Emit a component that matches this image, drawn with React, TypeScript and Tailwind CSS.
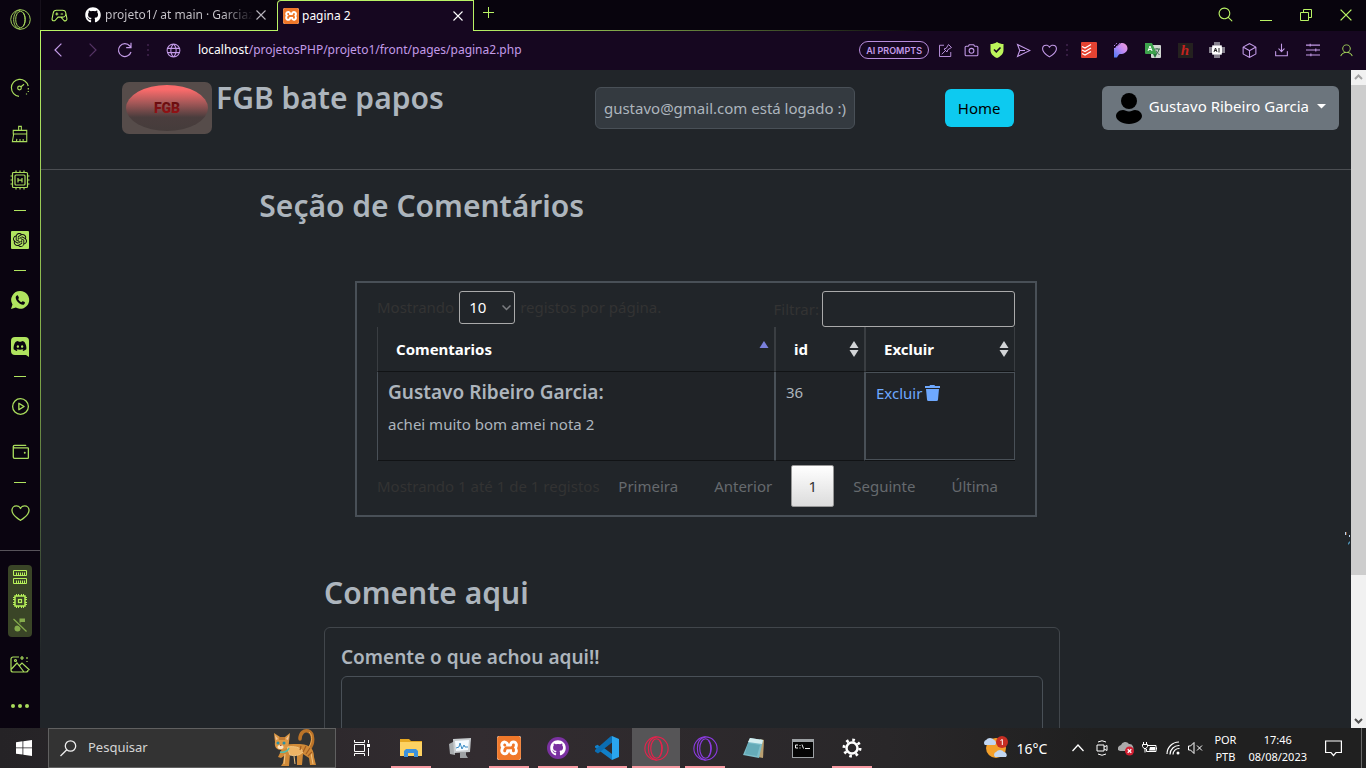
import type { ReactNode } from "react";
import {
  PiCamera,
  PiCube,
  PiDownloadSimple,
  PiGameController,
  PiGlobe,
  PiHeart,
  PiMagnifyingGlass,
  PiPlayCircle,
  PiUser,
  PiWallet,
} from "react-icons/pi";
import { FaDiscord, FaGithub } from "react-icons/fa";
import { SiOpenai, SiXampp } from "react-icons/si";

type IconProps = { size?: number; className?: string };

function Stroke({ size = 20, className = "", children, width = 1.2 }: IconProps & { children: ReactNode; width?: number }) {
  return (
    <svg
      width={size}
      height={size}
      viewBox="0 0 20 20"
      fill="none"
      stroke="currentColor"
      strokeWidth={width}
      className={className}
      aria-hidden="true"
    >
      {children}
    </svg>
  );
}

function OperaRings({ size = 22 }: IconProps) {
  return (
    <Stroke size={size} width={0.9}>
      <circle cx="10" cy="10" r="9.300" />
      <ellipse cx="10" cy="10" rx="4.600" ry="7.800" />
      <path d="M10 .7C5.500 1.500 3.500 5.500 3.500 10s2 8.500 6.500 9.300M12.500 3.500c2.300 3 2.300 10 0 13" />
    </Stroke>
  );
}

function Gauge() {
  return (
    <Stroke size={20}>
      <path d="M9 18.300A8.500 8.500 0 1 1 18.200 8" />
      <path d="M18.300 10v1.500M18.300 13v1M16.500 15.500v1" />
      <circle cx="9.500" cy="10" r="1.800" />
      <path d="m11 8.700 3-2.500" />
    </Stroke>
  );
}

function Brush() {
  return (
    <Stroke size={18}>
      <path d="M8.500 6V1.500h3V6M2.500 6h15v4h-15zM3 10l-1.500 8.500h16L17.500 10M6 18.500l.5-3M10 18.500v-3M13.500 18.500v-3" />
    </Stroke>
  );
}

function MemoryChip() {
  return (
    <Stroke size={20}>
      <rect x="2.500" y="2.500" width="15" height="15" rx="1" />
      <rect x="5" y="5" width="10" height="10" rx="1" />
      <path d="M8 8v4.500M12 8v4.500M8 10.200h4M6 .5v2M10 .5v2M14 .5v2M6 17.500v2M10 17.500v2M14 17.500v2M.5 6h2M.5 10h2M.5 14h2M17.500 6h2M17.500 10h2M17.500 14h2" />
    </Stroke>
  );
}

function DiscordTile() {
  return (
    <span className="relative flex size-[18px] items-center justify-center rounded-t-sm rounded-bl-sm bg-[#b0e45f] text-[#0a0410]">
      <FaDiscord size={14} />
      <svg width="6" height="4" viewBox="0 0 6 4" className="absolute -bottom-[2px] right-0" aria-hidden="true">
        <path d="M0 0h6v4z" fill="#b0e45f" />
      </svg>
    </span>
  );
}

function WhatsappBubble() {
  return (
    <svg width="20" height="20" viewBox="0 0 20 20" aria-hidden="true">
      <path d="M10.300 1a8.900 8.900 0 1 1-4.500 16.600L1 19l1.500-4.500A8.900 8.900 0 0 1 10.300 1z" fill="#b0e45f" />
      <path
        d="M7 5.500c.6-.4 1 0 1.300.7l.6 1.500c.1.500-.4.900-.8 1.300.8 1.600 1.900 2.500 3.400 3.200.5-.5.900-1.100 1.300-1l1.900.9c.6.400.1 1.900-.7 2.300-2.900 1.300-8.300-3.200-8.300-6.900 0-1 .700-1.700 1.300-2z"
        fill="#0a0410"
      />
    </svg>
  );
}

function RamIcon() {
  return (
    <svg width="16" height="16" viewBox="0 0 16 16" fill="none" stroke="#b8f25a" aria-hidden="true">
      <path d="M1.500 1.500h13v5h-13zM1.500 9.500h13v5h-13z" />
      <path d="M4.500 3.500v3M6.500 3.500v3M8.500 3.500v3M10.500 3.500v3M12.500 3.500v3M4.500 11.500v3M6.500 11.500v3M8.500 11.500v3M10.500 11.500v3M12.500 11.500v3" />
    </svg>
  );
}

function CpuIcon() {
  return (
    <svg width="16" height="16" viewBox="0 0 16 16" fill="none" stroke="#b8f25a" aria-hidden="true">
      <rect x="3" y="3" width="10" height="10" strokeWidth="1.500" />
      <rect x="6.500" y="6.500" width="3" height="3" strokeWidth="1.200" />
      <path d="M4.500 1v2M6.500 1v2M9.500 1v2M11.500 1v2M4.500 13v2M6.500 13v2M9.500 13v2M11.500 13v2M1 4.500h2M1 6.500h2M1 9.500h2M1 11.500h2M13 4.500h2M13 6.500h2M13 9.500h2M13 11.500h2" />
    </svg>
  );
}

function MutedNote() {
  return (
    <svg width="16" height="16" viewBox="0 0 16 16" aria-hidden="true">
      <circle cx="5.500" cy="11.500" r="3" fill="#85ab4c" />
      <path d="M7.500 11V1.500H13V5H8.500" fill="#85ab4c" />
      <path d="m1.500 2 13 12.500" stroke="#3a4527" strokeWidth="3" />
      <path d="m1.500 2 13 12.500" stroke="#85ab4c" strokeWidth="1.200" />
    </svg>
  );
}

function PictureWand() {
  return (
    <Stroke size={20}>
      <path d="M9 2H3a2 2 0 0 0-2 2v11a2 2 0 0 0 2 2h13a2 2 0 0 0 2-2M1.500 14 7 8l7 9M9 11l3-3 7.500 7M12 1v4M10 3h4M17 2v2M17 6v1" />
      <circle cx="5.500" cy="5.500" r="1" />
    </Stroke>
  );
}

const railGroups: { label: string; icon: ReactNode }[][] = [
  [
    { label: "GX Control", icon: <Gauge /> },
    { label: "GX Cleaner", icon: <Brush /> },
    { label: "Hot Tabs Killer", icon: <MemoryChip /> },
  ],
  [
    {
      label: "ChatGPT",
      icon: (
        <span className="flex size-[18px] items-center justify-center rounded-[1px] bg-[#b0e45f] text-[#0a0410]">
          <SiOpenai size={14} />
        </span>
      ),
    },
  ],
  [
    { label: "WhatsApp", icon: <WhatsappBubble /> },
    { label: "Discord", icon: <DiscordTile /> },
  ],
  [
    { label: "Player", icon: <PiPlayCircle size={21} /> },
    { label: "Wallet", icon: <PiWallet size={21} /> },
  ],
];

function RailButton({ label, children }: { label: string; children: ReactNode }) {
  return (
    <button type="button" aria-label={label} className="flex h-[46px] w-full items-center justify-center">
      {children}
    </button>
  );
}

function RailDash() {
  return (
    <div className="flex h-[14px] items-center justify-center">
      <span className="h-px w-3 bg-[#b0e45f]" />
    </div>
  );
}

function SideRail() {
  return (
    <aside className="flex w-10 shrink-0 flex-col bg-[#0a0410] text-[#a9dc5c]">
      <button type="button" aria-label="Opera GX" className="flex h-10 w-full items-center justify-center">
        <OperaRings size={21} />
      </button>
      <nav aria-label="Barra lateral" className="mt-[26px]">
        {railGroups.map((group) => (
          <div key={group[0].label}>
            {group.map((item) => (
              <RailButton key={item.label} label={item.label}>
                {item.icon}
              </RailButton>
            ))}
            <RailDash />
          </div>
        ))}
        <RailButton label="Favoritos">
          <PiHeart size={21} />
        </RailButton>
      </nav>
      <hr className="mt-[15px] border-[#57535a]" />
      <div className="mx-2 mt-[14px] flex flex-col items-center gap-2 rounded-sm bg-[#3a4527] py-1">
        <RamIcon />
        <CpuIcon />
        <MutedNote />
      </div>
      <button type="button" aria-label="Planos de fundo" className="mt-2 flex h-10 items-center justify-center">
        <PictureWand />
      </button>
      <button type="button" aria-label="Mais" className="flex h-11 items-center justify-center gap-[3px]">
        <span className="size-1 rounded-full bg-current" />
        <span className="size-1 rounded-full bg-current" />
        <span className="size-1 rounded-full bg-current" />
      </button>
    </aside>
  );
}

function Cross({ size = 10 }: IconProps) {
  return (
    <svg width={size} height={size} viewBox="0 0 10 10" stroke="currentColor" strokeWidth="1.100" aria-hidden="true">
      <path d="M.5.5l9 9M9.500.5l-9 9" />
    </svg>
  );
}

function XamppTile({ size }: { size: number }) {
  return <SiXampp size={size} className="rounded-xs bg-white text-[#f0782a]" />;
}

function TabStrip() {
  return (
    <div className="flex h-[31px] bg-[#08040d] text-[#b9f365]">
      <div className="flex w-[236px] items-center border-b border-[#b9f365] pl-[10px]">
        <PiGameController size={17} />
        <FaGithub size={16} className="ml-[17px] text-white" />
        <span className="ml-1 w-[148px] bg-linear-to-r from-[#c9c6cc] from-80% to-transparent bg-clip-text text-[12px] whitespace-nowrap text-transparent">
          projeto1/ at main · Garciaza
        </span>
        <button type="button" aria-label="Fechar projeto1" className="ml-[3px] text-[#b9b5bd]">
          <Cross />
        </button>
      </div>
      <div className="flex w-[197px] items-center rounded-tl-sm border-x border-t border-[#b9f365] bg-[#160720] pr-[10px] pl-[5px] text-white">
        <XamppTile size={16} />
        <span className="ml-[3px] flex-1 text-[12px]">pagina 2</span>
        <button type="button" aria-label="Fechar pagina 2">
          <Cross />
        </button>
      </div>
      <div className="flex flex-1 flex-col">
        <div className="flex flex-1 items-center pr-[14px] pl-[9px]">
          <button type="button" aria-label="Nova aba" className="mb-1">
            <svg width="12" height="12" viewBox="0 0 12 12" stroke="currentColor" aria-hidden="true">
              <path d="M5.500 0v11M0 5.500h11" />
            </svg>
          </button>
          <div className="ml-auto flex items-center gap-7">
            <button type="button" aria-label="Pesquisar abas" className="mr-[-2px] mb-[2px]">
              <PiMagnifyingGlass size={17} />
            </button>
            <button type="button" aria-label="Minimizar">
              <svg width="12" height="12" viewBox="0 0 12 12" stroke="currentColor" aria-hidden="true">
                <path d="M0 11.500h12" />
              </svg>
            </button>
            <button type="button" aria-label="Restaurar">
              <svg width="12" height="12" viewBox="0 0 12 12" fill="none" stroke="currentColor" aria-hidden="true">
                <path d="M.5 3.500h8v8h-8zM3.500 3.500v-3h8v8h-3" />
              </svg>
            </button>
            <button type="button" aria-label="Fechar">
              <Cross size={12} />
            </button>
          </div>
        </div>
        <div className="h-px bg-linear-to-r from-[#b9f365] to-transparent to-50%" />
      </div>
    </div>
  );
}

function BarDots() {
  return (
    <svg width="2" height="12" viewBox="0 0 2 12" fill="#361c42" aria-hidden="true">
      <path d="M0 0h2v2H0zM0 5h2v2H0zM0 10h2v2H0z" />
    </svg>
  );
}

function BarButton({ label, children }: { label: string; children: ReactNode }) {
  return (
    <button type="button" aria-label={label} className="flex w-[26px] items-center justify-center">
      {children}
    </button>
  );
}

function ExtButton({ label, children }: { label: string; children: ReactNode }) {
  return (
    <button type="button" aria-label={label} className="flex w-8 items-center justify-center">
      {children}
    </button>
  );
}

function AddressBar() {
  return (
    <div className="flex h-[39px] items-center bg-[#160720] pr-[3px] pb-px text-[#c39be8]">
      <button type="button" aria-label="Voltar" className="flex w-9 justify-center">
        <Stroke size={16} width={1.5}>
          <path d="M13 2 5 10l8 8" />
        </Stroke>
      </button>
      <button type="button" aria-label="Avançar" className="flex w-[30px] justify-center text-[#553465]">
        <Stroke size={16} width={1.5}>
          <path d="m7 2 8 8-8 8" />
        </Stroke>
      </button>
      <button type="button" aria-label="Recarregar" className="flex w-9 justify-center">
        <Stroke size={16} width={1.5}>
          <path d="M17.500 12.500A8 8 0 1 1 16 5l1.500 1.500M17.500 1v6h-6" />
        </Stroke>
      </button>
      <span className="ml-1">
        <BarDots />
      </span>
      <PiGlobe size={17} className="ml-4" />
      <p className="ml-4 flex-1 text-[12px] whitespace-nowrap">
        <span className="text-white">localhost</span>/projetosPHP/projeto1/front/pages/pagina2.php
      </p>
      <button
        type="button"
        className="mr-[3px] h-[18px] rounded-full border border-[#b78ddb] px-[6px] font-['Inter','Noto_Sans',sans-serif] text-[9px] leading-none font-semibold whitespace-nowrap"
      >
        AI PROMPTS
      </button>
      <BarButton label="Fixar">
        <Stroke size={15}>
          <path d="M8 3H2v15h15v-6M5 15l5-5M8 8l4 4 1-3 5-3-4-4-3 5z" />
        </Stroke>
      </BarButton>
      <BarButton label="Instantâneo">
        <PiCamera size={17} />
      </BarButton>
      <BarButton label="Bloqueador">
        <svg width="14" height="16" viewBox="0 0 14 16" aria-hidden="true">
          <path d="M7 0c2 1.500 4.500 2 6.500 2v6c0 4-3 6.500-6.500 8C3.500 14.500.5 12 .5 8V2C2.500 2 5 1.500 7 0z" fill="#bdf55b" />
          <path d="m4 7.500 2.300 2.300L10.500 5.500" fill="none" stroke="#160720" strokeWidth="1.600" />
        </svg>
      </BarButton>
      <BarButton label="Meu fluxo">
        <Stroke size={15} width={1.4}>
          <path d="m2 2 16.500 8L2 18l3-8zM5 10h7" />
        </Stroke>
      </BarButton>
      <BarButton label="Adicionar aos favoritos">
        <PiHeart size={17} />
      </BarButton>
      <span className="mr-[5px] ml-1">
        <BarDots />
      </span>
      <ExtButton label="Todoist">
        <svg width="16" height="16" viewBox="0 0 16 16" aria-hidden="true">
          <rect width="16" height="16" rx="1" fill="#e44332" />
          <path d="m1 4.500 3 1.500 6-3.500M1 8l3 1.500L10 6M1 11.500 4 13l6-3.500" fill="none" stroke="#fff" strokeWidth="1.300" />
        </svg>
      </ExtButton>
      <ExtButton label="Pesquisa">
        <svg width="16" height="16" viewBox="0 0 16 16" aria-hidden="true">
          <defs>
            <linearGradient id="pGrad" x1="0" y1="1" x2="1" y2="0">
              <stop offset="0" stopColor="#4a7af5" />
              <stop offset=".55" stopColor="#c08af5" />
              <stop offset="1" stopColor="#f59bd2" />
            </linearGradient>
          </defs>
          <path d="M8 1c4 0 6.500 2 6.500 5.500S11 12 7.500 12C5.500 12 5 14 4 15.500H1V7z" fill="url(#pGrad)" />
          <path d="M1 4l3-3M1 7l6-6" stroke="#b88af0" strokeDasharray="1.500 1" />
        </svg>
      </ExtButton>
      <ExtButton label="Tradutor">
        <svg width="16" height="16" viewBox="0 0 16 16" aria-hidden="true">
          <rect x="6" y="3" width="10" height="13" rx="1" fill="#cfd6d0" />
          <path d="M0 1h7l5 11H1a1 1 0 0 1-1-1z" fill="#3da34c" />
          <path d="m3 9 2-5 2 5M3.700 7.500h2.600" fill="none" stroke="#fff" />
          <path d="M9.500 7H15M12 6v1M14 7c-.5 3-2 4.500-3.500 5.500M11 8.500c.5 2 2 3.500 3.500 4" fill="none" stroke="#37654a" />
          <path d="m8 12 2 4 2-4z" fill="#24743a" />
        </svg>
      </ExtButton>
      <ExtButton label="Honey">
        <span className="flex size-[15px] items-center justify-center bg-[#24211f] font-['Liberation_Serif',serif] text-[15px] leading-none font-bold text-[#c42320] italic">
          h
        </span>
      </ExtButton>
      <ExtButton label="Assistente">
        <svg width="16" height="16" viewBox="0 0 16 16" aria-hidden="true">
          <path d="M5 0h6v3h2v2h3v6h-3v2h-2v3H5v-3H3v-2H0V5h3V3h2z" fill="#85808d" />
          <rect x="3" y="3.500" width="10" height="9" rx="2" fill="#fff" />
          <path d="m5 10 1.500-4L8 10M5.500 8.500h2M10 6v4.500" fill="none" stroke="#222" />
        </svg>
      </ExtButton>
      <ExtButton label="Extensões">
        <PiCube size={17} />
      </ExtButton>
      <ExtButton label="Downloads">
        <PiDownloadSimple size={17} />
      </ExtButton>
      <ExtButton label="Configuração fácil">
        <Stroke size={14} width={1.5}>
          <path d="M0 3h20M0 10h20M0 17h20M6 1v4M14 8v4M7 15v4" />
        </Stroke>
      </ExtButton>
      <button type="button" aria-label="Perfil" className="flex w-[34px] items-center justify-center text-[#a9dc5c]">
        <PiUser size={15} />
      </button>
    </div>
  );
}

function Logo() {
  return (
    <svg width="90" height="52" viewBox="0 0 90 52" role="img" aria-label="Logotipo FGB">
      <defs>
        <linearGradient id="logoGrad" x1="0" y1="0" x2="0" y2="1">
          <stop offset="0.100" stopColor="#fa6b6b" />
          <stop offset="0.400" stopColor="#a25757" />
          <stop offset="0.700" stopColor="#4a3d3d" />
          <stop offset="1" stopColor="#453c3b" />
        </linearGradient>
        <linearGradient id="logoText" x1="0" y1="0" x2="0" y2="1">
          <stop offset="0" stopColor="#5d0b0d" />
          <stop offset="1" stopColor="#a01417" />
        </linearGradient>
      </defs>
      <rect width="90" height="52" rx="7" fill="#564c4a" />
      <ellipse cx="45" cy="26" rx="41" ry="23" fill="url(#logoGrad)" />
      <text
        x="45"
        y="31"
        textAnchor="middle"
        fontFamily="'Liberation Sans Narrow', 'Roboto', sans-serif"
        fontWeight="900"
        fontSize="14"
        fill="url(#logoText)"
      >
        FGB
      </text>
    </svg>
  );
}

function SiteHeader() {
  return (
    <header className="grid h-[100px] shrink-0 grid-cols-[473fr_350fr_157fr_237fr] items-start border-b border-[#4b4e52] pt-3 pr-3 pl-[81px]">
      <div className="flex gap-1">
        <Logo />
        <h1 className="text-[30px] leading-8 font-semibold whitespace-nowrap">FGB bate papos</h1>
      </div>
      <p className="mt-[5px] flex h-[42px] items-center justify-self-start rounded-md border border-[#495057] bg-[#343a40] px-2 text-[15px] whitespace-nowrap">
        gustavo@gmail.com está logado :)
      </p>
      <a
        href="#home"
        className="mt-[7px] flex h-[38px] items-center justify-self-start rounded-md bg-[#0dcaf0] px-[13px] text-[15px] text-black"
      >
        Home
      </a>
      <button
        type="button"
        className="mt-1 flex h-11 items-center justify-self-end rounded-md bg-[#6c757d] px-[13px] text-[15px] whitespace-nowrap text-white"
      >
        <svg width="28" height="32" viewBox="0 0 28 32" aria-hidden="true">
          <circle cx="14" cy="9" r="8" />
          <path d="M1 24c0-3 3-6 7-6 2 0 3.500 1.500 6 1.500S18 18 20 18c4 0 7 3 7 6 0 4-6 8-13 8S1 28 1 24z" />
        </svg>
        <span className="mb-1 ml-[6px]">Gustavo Ribeiro Garcia</span>
        <svg width="9" height="5" viewBox="0 0 9 5" fill="currentColor" className="mb-1 ml-2" aria-hidden="true">
          <path d="M0 0h9L4.500 4.500z" />
        </svg>
      </button>
    </header>
  );
}

function SortArrows({ sorted = false }: { sorted?: boolean }) {
  return (
    <svg width="10" height="16" viewBox="0 0 10 16" aria-hidden="true" className={sorted ? "text-[#7a80dc]" : "text-[#d3d5d7]"}>
      <path d="M5 0l4.500 7h-9z" fill="currentColor" />
      {!sorted && <path d="M5 16L.5 9h9z" fill="currentColor" />}
    </svg>
  );
}

function HeadCell({ title, sorted }: { title: string; sorted?: boolean }) {
  return (
    <th
      scope="col"
      className="h-[45px] border-x border-b border-x-[#3a3e42] border-b-[#111315] p-0 text-left font-bold text-white"
    >
      <button type="button" className="flex w-full items-center justify-between pr-[5px] pl-[18px]">
        {title}
        <SortArrows sorted={sorted} />
      </button>
    </th>
  );
}

function PageButton({ children }: { children: ReactNode }) {
  return (
    <button type="button" className="px-[17px] text-[#666a6e]">
      {children}
    </button>
  );
}

function CommentTable() {
  return (
    <div className="mx-auto mt-[55px] max-w-full border-2 border-[#495057] px-5 pt-2 pb-2 text-[15px] lg:w-[682px]">
      <div className="flex h-9 items-start justify-between text-[#333]">
        <label className="flex items-center gap-[5px]">
          Mostrando
          <span className="relative">
            <select defaultValue="10" className="h-[33px] w-14 appearance-none rounded-[3px] border border-[#aaa] pl-[9px] text-white">
              <option value="10">10</option>
              <option value="25">25</option>
            </select>
            <svg
              width="9"
              height="6"
              viewBox="0 0 9 6"
              fill="none"
              stroke="#7b7d80"
              strokeWidth="1.500"
              className="pointer-events-none absolute top-[14px] right-1"
              aria-hidden="true"
            >
              <path d="M.5.5l4 4 4-4" />
            </svg>
          </span>
          registos por página.
        </label>
        <label className="flex items-center gap-[3px]">
          Filtrar:
          <input type="search" className="h-9 w-[193px] rounded-[3px] border border-[#aaa] px-2 text-white" />
        </label>
      </div>
      <table className="w-full table-fixed border-separate border-spacing-0">
        <colgroup>
          <col />
          <col className="w-[90px]" />
          <col className="w-[150px]" />
        </colgroup>
        <thead>
          <tr>
            <HeadCell title="Comentarios" sorted />
            <HeadCell title="id" />
            <HeadCell title="Excluir" />
          </tr>
        </thead>
        <tbody>
          <tr className="align-top">
            <td className="h-[89px] border-x border-b border-x-[#495057] border-b-[#111315] bg-[#202327] px-[10px] pt-2">
              <h5 className="text-[19px] leading-6 font-semibold">Gustavo Ribeiro Garcia:</h5>
              <p className="mt-2 leading-6">achei muito bom amei nota 2</p>
            </td>
            <td className="border-x border-b border-x-[#495057] border-b-[#111315] bg-[#202327] px-[10px] pt-2 leading-6">36</td>
            <td className="h-[89px] border-b border-b-[#111315] bg-[#202327] p-0">
              <div className="h-[88px] border border-[#495057] px-[10px] pt-2">
                <a href="#excluir" className="flex items-center gap-[3px] leading-6 text-[#6ea8fe]">
                  Excluir
                  <svg width="15" height="16" viewBox="0 0 15 16" fill="currentColor" aria-hidden="true">
                    <path d="M0 1h4.500L5 0h4.500l.5 1H15v2H0zM1 4h13l-1 10.500a1.500 1.500 0 0 1-1.500 1.500h-8A1.500 1.500 0 0 1 2 14.500z" />
                  </svg>
                </a>
              </div>
            </td>
          </tr>
        </tbody>
      </table>
      <div className="mt-1 flex h-[42px] items-center justify-between">
        <p className="whitespace-nowrap text-[#333]">Mostrando 1 até 1 de 1 registos</p>
        <nav aria-label="Paginação" className="flex items-center gap-[2px]">
          <PageButton>Primeira</PageButton>
          <PageButton>Anterior</PageButton>
          <button
            type="button"
            aria-current="page"
            className="h-[42px] w-[43px] rounded-xs border border-[#979797] bg-linear-to-b from-white to-[#dcdcdc] text-[#333]"
          >
            1
          </button>
          <PageButton>Seguinte</PageButton>
          <PageButton>Última</PageButton>
        </nav>
      </div>
    </div>
  );
}

function PageContent() {
  return (
    <main className="relative flex min-w-0 flex-1 flex-col overflow-hidden bg-[#212529] text-[#adb5bd]">
      <SiteHeader />
      <section className="mx-auto w-2/3 pt-4">
        <h2 className="text-[30px] leading-10 font-semibold">Seção de Comentários</h2>
      </section>
      <div className="shrink-0">
        <CommentTable />
      </div>
      <section className="mx-auto mt-[56px] max-w-full shrink-0 pr-2 lg:w-[744px]">
        <h2 className="text-[30px] leading-10 font-semibold">Comente aqui</h2>
        <form className="mt-[14px] rounded-md border border-[#41464b] px-4 pt-[17px]">
          <label htmlFor="comment" className="block text-[19px] leading-6 font-semibold">
            Comente o que achou aqui!!
          </label>
          <textarea id="comment" rows={5} className="mt-[7px] block w-full resize-none rounded-md border border-[#495057] bg-transparent p-3" />
        </form>
      </section>
      <svg width="6" height="14" viewBox="0 0 6 14" className="absolute top-[462px] right-0" aria-hidden="true">
        <path d="M0 0h1v3H0zM4 3h1v2H4z" fill="#b9d4f0" />
        <path d="M1 0h1v3H1z" fill="#7d5234" />
        <path d="M5 9v2l-2 2v-2z" fill="#4d91b5" />
      </svg>
    </main>
  );
}

function ScrollTrack() {
  return (
    <div aria-hidden="true" className="flex w-[15px] shrink-0 flex-col bg-[#f1f1f1]">
      <svg width="15" height="15" viewBox="0 0 15 15" fill="none" stroke="#a3a3a3" strokeWidth="2">
        <path d="m4 9 3.500-3.500L11 9" />
      </svg>
      <div className="h-[74.5%] bg-[#cdcdcd]" />
      <svg width="15" height="15" viewBox="0 0 15 15" fill="none" stroke="#505050" strokeWidth="2" className="mt-auto">
        <path d="M4 6l3.500 3.500L11 6" />
      </svg>
    </div>
  );
}

function Cat() {
  return (
    <svg width="46" height="38" viewBox="0 0 46 38" aria-hidden="true">
      <path d="M37 20c5-5 5-16-1-18-4-1-8 2-8 8" fill="none" stroke="#bb7328" strokeWidth="3.500" strokeLinecap="round" />
      <path d="M37 18c3-5 4-12 0-15" fill="none" stroke="#eaa851" strokeWidth="1" />
      <path d="M12 15c7 1 15-1 22 1 7 2 8 8 8 12l2 8h-6l-1-7-6-4-1 11h-5l0-10-7-1-1 12h-8l2-3 1-7-3 2-3-1 3-6z" fill="#d08a38" />
      <path d="M15 18c7-1 14 0 16 5-4 4-9 4-13 3zM13 25l-1 10M22 27l1 8M39 24l2 11" fill="#eeb465" stroke="#f2c582" strokeWidth="1" />
      <path d="M34 17l-3 6M38 19l-4 6M29 17l-1 4M40 23l-4 4" stroke="#a45d20" strokeWidth="1.200" />
      <path d="M3 13 2 4l6 4h5l5-4-1 9c0 5-4 8-8 8s-7-3-6-8z" fill="#dc9844" />
      <path d="M3 6l3 4-2 1zM17 6l-3 4 2 1z" fill="#f5c49c" />
      <path d="M8 8v3M10 8v3M12 8v3" stroke="#a45d20" />
      <circle cx="6" cy="14" r="1.500" fill="#2b8fa6" />
      <circle cx="12" cy="14" r="1.500" fill="#2b8fa6" />
      <ellipse cx="8.500" cy="18" rx="3" ry="2" fill="#fae3c2" />
      <path d="M8 16h1.500v1H8z" fill="#a84e38" />
      <path d="M8 23c4 1 8-1 9-4" fill="none" stroke="#55bdac" strokeWidth="1.500" />
    </svg>
  );
}

function Task({
  label,
  open = false,
  active = false,
  children,
}: {
  label: string;
  open?: boolean;
  active?: boolean;
  children: ReactNode;
}) {
  return (
    <button
      type="button"
      aria-label={label}
      className={`flex w-12 flex-col items-center ${active ? "bg-[#565557]" : ""}`}
    >
      <span className="flex flex-1 items-center pt-[2px]">{children}</span>
      <span className={`h-[2px] ${active ? "w-12" : "w-10"} ${open ? "bg-[#f79aa2]" : ""}`} />
    </button>
  );
}

function VsCode() {
  return (
    <svg width="24" height="24" viewBox="0 0 24 24" aria-hidden="true">
      <path d="M17 .5 5.500 11 2.500 8.700 0 10v1.500L17 24v-6L9 12l8-6z" fill="#1180c9" />
      <path d="M17 0v6.500L3 17.500l-3-2V14L15.500.5z" fill="#0b6db2" />
      <path d="M17 0l7 3v18l-7 3z" fill="#2aa5ee" />
    </svg>
  );
}

function Taskbar() {
  return (
    <footer className="flex h-10 shrink-0 bg-[linear-gradient(90deg,#252326,#322c30_35%,#292729_65%,#202020_80%)] text-white">
      <button type="button" aria-label="Iniciar" className="flex w-12 items-center justify-center">
        <svg width="16" height="16" viewBox="0 0 16 16" fill="currentColor" aria-hidden="true">
          <path d="M0 2.200 6.500 1.300v6.200H0zM7.300 1.200 16 0v7.500H7.300zM0 8.300h6.500v6.300L0 13.700zM7.300 8.300H16V16l-8.700-1.200z" />
        </svg>
      </button>
      <div className="flex w-72 items-center border border-[#606060] bg-[#333] pl-[11px]">
        <svg width="17" height="17" viewBox="0 0 17 17" fill="none" stroke="#eee" strokeWidth="1.300" aria-hidden="true">
          <circle cx="10.500" cy="6" r="5.200" />
          <path d="M6.800 9.700.5 16" />
        </svg>
        <input
          type="text"
          aria-label="Pesquisar no Windows"
          placeholder="Pesquisar"
          className="ml-[11px] w-44 min-w-0 bg-transparent text-[13px] placeholder:text-[#d5d5d5]"
        />
        <span className="ml-2">
          <Cat />
        </span>
      </div>
      <div className="ml-[2px] flex gap-px">
        <Task label="Visão de tarefas">
          <svg width="16" height="16" viewBox="0 0 16 16" fill="none" stroke="currentColor" aria-hidden="true">
            <path d="M.5 4.500h10v7H.5zM.5 0v2.500h10V0M.5 16v-2.500h10V16M14.500 0v3M14.500 8v8" />
            <path d="M13 4h3v3h-3z" fill="currentColor" stroke="none" />
          </svg>
        </Task>
        <Task label="Explorador de arquivos" open>
          <svg width="22" height="18" viewBox="0 0 22 18" aria-hidden="true">
            <path d="M0 0h9l2 2h11v15H0z" fill="#e6a822" />
            <path d="M0 3h22v14H0z" fill="#fdd262" />
            <path d="M4 18v-6l2-2h10l2 2v6h-4v-4H8v4z" fill="#3d91dc" />
          </svg>
        </Task>
        <Task label="Monitor de desempenho">
          <svg width="24" height="22" viewBox="0 0 24 22" aria-hidden="true">
            <path d="M1 7l6-3v14l-5-1z" fill="#a9adb0" />
            <path d="M5 2l18-1-1 14-16 1z" fill="#c9cdd0" />
            <path d="M7 4l14-1-1 10-12 1z" fill="#f5faff" />
            <path d="m8 11 3-1 1-4 2 6 2-4 1 2h3" fill="none" stroke="#3a8bc4" />
            <path d="M12 15h6v3l2 3h-8z" fill="#9da1a4" />
          </svg>
        </Task>
        <Task label="XAMPP" open>
          <XamppTile size={24} />
        </Task>
        <Task label="GitHub Desktop" open>
          <span className="flex size-[22px] items-center justify-center rounded-full bg-[#7a31a0]">
            <FaGithub size={16} />
          </span>
        </Task>
        <Task label="Visual Studio Code" open>
          <VsCode />
        </Task>
        <Task label="Opera GX" open active>
          <span className="text-[#e5234c]">
            <OperaRings size={25} />
          </span>
        </Task>
        <Task label="Opera" open>
          <span className="text-[#8c3be0]">
            <OperaRings size={25} />
          </span>
        </Task>
        <Task label="Bloco de notas">
          <svg width="24" height="22" viewBox="0 0 24 22" aria-hidden="true">
            <path d="M18 2l4 1-1 18-5-1z" fill="#b9a071" />
            <path d="M8 1l13 2-4 18L1 18z" fill="#7dbdc9" />
            <path d="M8 1l13 2-1 4L6 5z" fill="#d5eef0" />
            <path d="M6 6l12 2-3 11L3 17z" fill="#559fae" opacity=".6" />
          </svg>
        </Task>
        <Task label="Prompt de comando">
          <svg width="22" height="19" viewBox="0 0 22 19" aria-hidden="true">
            <rect width="22" height="19" fill="#9da1a4" />
            <rect x="1" y="3" width="20" height="15" fill="#050505" />
            <path d="M6 6H3.500v3H6M8 6v1M8 8.500v1M10 5.500l1.500 4M13 9.500h5" fill="none" stroke="#eee" />
          </svg>
        </Task>
        <Task label="Configurações" open>
          <svg width="20" height="20" viewBox="0 0 20 20" fill="none" stroke="currentColor" aria-hidden="true">
            <circle cx="10" cy="10" r="5.500" strokeWidth="2.500" />
            <circle cx="10" cy="10" r="8" strokeWidth="3" strokeDasharray="2.600 3.683" />
          </svg>
        </Task>
      </div>
      <div className="ml-auto flex items-center whitespace-nowrap">
        <button type="button" className="flex items-center gap-2 text-[14px]">
          <svg width="26" height="24" viewBox="0 0 26 24" aria-hidden="true">
            <circle cx="13" cy="12" r="10" fill="#f3a02b" />
            <path d="M2 9a3 3 0 0 1 1-5 5 5 0 0 1 8 0 3 3 0 0 1 1 5z" fill="#c2d7f2" />
            <path d="M12 21a3 3 0 0 1 1-5 5 5 0 0 1 8 0 3 3 0 0 1 2 5z" fill="#c2d7f2" />
            <circle cx="19" cy="6" r="6" fill="#c82e23" />
            <path d="M17.500 4.500 19.300 3.500V9" fill="none" stroke="#fff" />
          </svg>
          16°C
        </button>
        <div className="ml-[25px] flex items-center gap-2">
          <svg width="12" height="8" viewBox="0 0 12 8" fill="none" stroke="currentColor" strokeWidth="1.300" aria-hidden="true">
            <path d="m.5 7 5.500-6 5.500 6" />
          </svg>
          <svg width="16" height="16" viewBox="0 0 16 16" fill="none" stroke="currentColor" className="ml-[2px]" aria-hidden="true">
            <path d="M3 5h7v6H3zM10 7l3-1.500v5L10 9M4 2q4-2.500 8 0M4 14q4 2.500 8 0" />
          </svg>
          <svg width="16" height="16" viewBox="0 0 16 16" aria-hidden="true">
            <path d="M0 10a4 4 0 0 1 3-5 4.500 4.500 0 0 1 8-1 4 4 0 0 1 3 7H2z" fill="#aaa" />
            <circle cx="11.500" cy="11" r="4.500" fill="#d21f32" />
            <path d="m9.700 9.200 3.600 3.600m0-3.600-3.600 3.600" stroke="#fff" strokeWidth="1.300" />
          </svg>
          <svg width="16" height="14" viewBox="0 0 16 14" fill="none" stroke="currentColor" aria-hidden="true">
            <path d="M5.500 4.500H14v6H4.500V8M14.500 6.500v2M1.500 1v2M4.500 1v2M.5 3.500h5v2L4 7.500H2L.5 5.500zM3 7.500v4" />
            <path d="M8 6h5v3.500H7z" fill="currentColor" stroke="none" />
          </svg>
          <svg width="14" height="14" viewBox="0 0 14 14" fill="none" stroke="currentColor" strokeWidth="1.200" aria-hidden="true">
            <path d="M1 13A12 12 0 0 1 13 1M4 13.500A9 9 0 0 1 13.500 4.500M7 13.500A6 6 0 0 1 13.500 7.500" />
            <circle cx="12" cy="12" r="1.500" fill="currentColor" stroke="none" />
          </svg>
          <svg width="15" height="12" viewBox="0 0 15 12" fill="none" stroke="currentColor" aria-hidden="true">
            <path d="M.5 4h2L6 .5v11L2.500 8h-2zM9 3.500l5 5m0-5-5 5" />
          </svg>
        </div>
        <p className="ml-[11px] text-center text-[11px] leading-[17px]">
          POR
          <br />
          PTB
        </p>
        <p className="ml-3 text-center text-[11px] leading-[17px]">
          17:46
          <br />
          08/08/2023
        </p>
        <button type="button" aria-label="Notificações" className="mr-[19px] ml-[18px]">
          <svg width="17" height="17" viewBox="0 0 17 17" fill="none" stroke="currentColor" strokeWidth="1.200" aria-hidden="true">
            <path d="M.6 1h15.800v11.500H11L8.500 15.500 6 12.500H.6z" />
          </svg>
        </button>
        <span className="mr-1 h-10 w-px bg-[#696969]" />
      </div>
    </footer>
  );
}

export default function App() {
  return (
    <div className="flex h-screen flex-col overflow-hidden font-['Noto_Sans',sans-serif]">
      <div className="flex min-h-0 flex-1">
        <SideRail />
        <div className="flex w-px shrink-0 flex-col bg-[#15101a] pt-[30px]">
          <div className="flex-1 bg-linear-to-b from-[#b9f365] via-[#7da447] to-[#212529] to-90%" />
        </div>
        <div className="flex min-w-0 flex-1 flex-col">
          <TabStrip />
          <AddressBar />
          <div className="flex min-h-0 flex-1">
            <PageContent />
            <ScrollTrack />
          </div>
        </div>
      </div>
      <Taskbar />
    </div>
  );
}
